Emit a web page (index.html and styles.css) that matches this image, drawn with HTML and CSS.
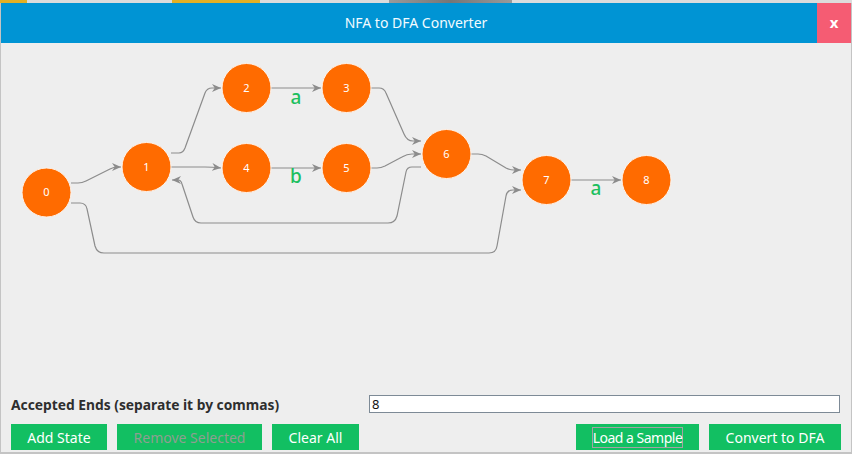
FILE: index.html
```html
<!DOCTYPE html>
<html lang="en">
<head>
    <meta charset="UTF-8">
    <meta name="viewport" content="width=device-width, initial-scale=1.0">
    <title>NFA to DFA Converter</title>
    <link rel="stylesheet" href="styles.css">
</head>
<body>
    <div class="desk-strip">
        <div class="seg yellow" style="width:27px"></div>
        <div class="seg light" style="width:145px"></div>
        <div class="seg yellow" style="width:88px"></div>
        <div class="seg light" style="width:129px"></div>
        <div class="seg dark" style="width:123px"></div>
        <div class="seg light grow"></div>
    </div>

    <div class="window">
        <div class="titlebar">
            <div class="title">NFA to DFA Converter</div>
            <div class="close">x</div>
        </div>

        <!-- Диаграма станів -->
        <div class="canvas">
            <svg class="graph" width="850" height="352" viewBox="1 43 850 352">
                <defs>
                    <marker id="arrow" viewBox="0 0 10 10" refX="10" refY="5" markerWidth="9" markerHeight="8" markerUnits="userSpaceOnUse" orient="auto" preserveAspectRatio="none">
                        <path d="M0,0 L10,5 L0,10 L3,5 Z" fill="#8c8c8c"/>
                    </marker>
                </defs>

                <g class="edges" marker-end="url(#arrow)">
                    <path d="M71,183 L78,183 Q82,183 86,181 L110,169 Q114,167 117,167 L121,167"/>
                    <path d="M171,153 L179,153 Q183,153 185,148 L205,93 Q207,88 212,88 L221,88"/>
                    <path d="M171,167 L205,167 Q212,167 221,168"/>
                    <path d="M271,88 L321,88"/>
                    <path d="M271,168 L321,168"/>
                    <path d="M371,88 L379,88 Q384,88 386,93 L404,134 Q407,141 413,141 L421,141"/>
                    <path d="M371,168 L377,168 Q381,168 385,166 L402,157 Q407,154 412,154 L421,154"/>
                    <path d="M421,167 L412,167 Q407,167 406,172 L397,216 Q395,223 388,223 L201,223 Q195,223 193,217 L182,184 Q181,180 178,180 L172,180"/>
                    <path d="M71,203 L80,203 Q86,203 87,209 L95,246 Q97,253 104,253 L489,253 Q496,253 497,246 L506,196 Q507,190 513,190 L521,190"/>
                    <path d="M471,154 L478,154 Q482,154 486,156 L506,168 Q510,170 514,170 L521,170"/>
                    <path d="M571,180 L621,180"/>
                </g>

                <g class="labels">
                    <text x="296" y="103.5">a</text>
                    <text x="296" y="183">b</text>
                    <text x="596" y="195">a</text>
                </g>

                <g class="nodes">
                    <circle cx="46.5" cy="192.5" r="24.5"/><text x="46.5" y="196">0</text>
                    <circle cx="146.5" cy="167" r="24.5"/><text x="146.5" y="170.5">1</text>
                    <circle cx="246.5" cy="88" r="24.5"/><text x="246.5" y="91.5">2</text>
                    <circle cx="346.5" cy="88" r="24.5"/><text x="346.5" y="91.5">3</text>
                    <circle cx="246.5" cy="168" r="24.5"/><text x="246.5" y="171.5">4</text>
                    <circle cx="346.5" cy="168" r="24.5"/><text x="346.5" y="171.5">5</text>
                    <circle cx="446.5" cy="154" r="24.5"/><text x="446.5" y="157.5">6</text>
                    <circle cx="546.5" cy="180" r="24.5"/><text x="546.5" y="183.5">7</text>
                    <circle cx="646.5" cy="180" r="24.5"/><text x="646.5" y="183.5">8</text>
                </g>
            </svg>
        </div>

        <div class="ends-row">
            <label class="ends-label" for="ends">Accepted Ends (separate it by commas)</label>
            <input class="ends-input" id="ends" type="text" value="8">
        </div>

        <div class="buttons">
            <button class="btn">Add State</button>
            <button class="btn disabled">Remove Selected</button>
            <button class="btn">Clear All</button>
            <button class="btn push"><span class="focus">Load a Sample</span></button>
            <button class="btn">Convert to DFA</button>
        </div>
    </div>
</body>
</html>
```

FILE: styles.css
```css
body {
    margin: 0;
    background-color: #c4c4c4;
    font-family: "Noto Sans", "DejaVu Sans", sans-serif;
    overflow: hidden;
}

/* Смужка робочого столу за вікном */
.desk-strip {
    display: flex;
    height: 3px;
}

.seg.yellow { background-color: #e2b024; }
.seg.light { background-color: #dcdcdc; }
.seg.dark { background: linear-gradient(to right, #9a9a9a, #767676 50%, #9a9a9a); }
.seg.grow { flex: 1; }

/* Вікно */
.window {
    margin-left: 1px;
    width: 850px;
    height: 449px;
    display: flex;
    flex-direction: column;
    background-color: #eeeeee;
}

.titlebar {
    height: 40px;
    display: flex;
    background-color: #0094d4;
    color: #f2fbff;
}

.title {
    flex: 1;
    text-align: center;
    line-height: 40px;
    font-size: 14px;
    padding-left: 14px;
}

.close {
    width: 34px;
    background-color: #f55c73;
    color: #ffffff;
    font-weight: bold;
    font-size: 15px;
    text-align: center;
    line-height: 38px;
}

/* Полотно з графом */
.canvas {
    height: 352px;
}

.graph {
    display: block;
}

.edges path {
    fill: none;
    stroke: #8c8c8c;
    stroke-width: 1.2;
}

.labels text {
    fill: #1dbf5e;
    font-size: 19px;
    font-weight: 500;
    text-anchor: middle;
}

.nodes circle {
    fill: #ff6b00;
    stroke: #fff3ea;
    stroke-width: 1;
}

.nodes text {
    fill: #ffffff;
    font-size: 11px;
    text-anchor: middle;
}

/* Поле кінцевих станів */
.ends-row {
    display: flex;
    align-items: center;
    height: 18px;
    padding: 0 11px 0 10px;
    margin-bottom: 11px;
}

.ends-label {
    width: 358px;
    font-size: 13.8px;
    font-weight: bold;
    color: #2e2e2e;
}

.ends-input {
    flex: 1;
    box-sizing: border-box;
    height: 18px;
    margin: 0;
    padding: 0 2px;
    border: 1px solid #7d8a96;
    background-color: #ffffff;
    font-family: inherit;
    font-size: 13px;
    color: #111111;
}

/* Кнопки */
.buttons {
    display: flex;
    gap: 10px;
    padding: 0 10px;
    height: 26px;
}

.btn {
    border: none;
    margin: 0;
    padding: 0;
    background-color: #12bf62;
    color: #ffffff;
    font-family: inherit;
    font-size: 14px;
}

.btn:nth-child(1) { width: 96px; }
.btn:nth-child(2) { width: 145px; }
.btn:nth-child(3) { width: 87px; }
.btn:nth-child(4) { width: 123px; }
.btn:nth-child(5) { width: 132px; }

.btn.disabled {
    color: #8e9e91;
}

.btn.push {
    margin-left: auto;
}

.focus {
    border: 1px solid #a3a3a3;
    padding: 0;
    letter-spacing: -0.5px;
}
```
